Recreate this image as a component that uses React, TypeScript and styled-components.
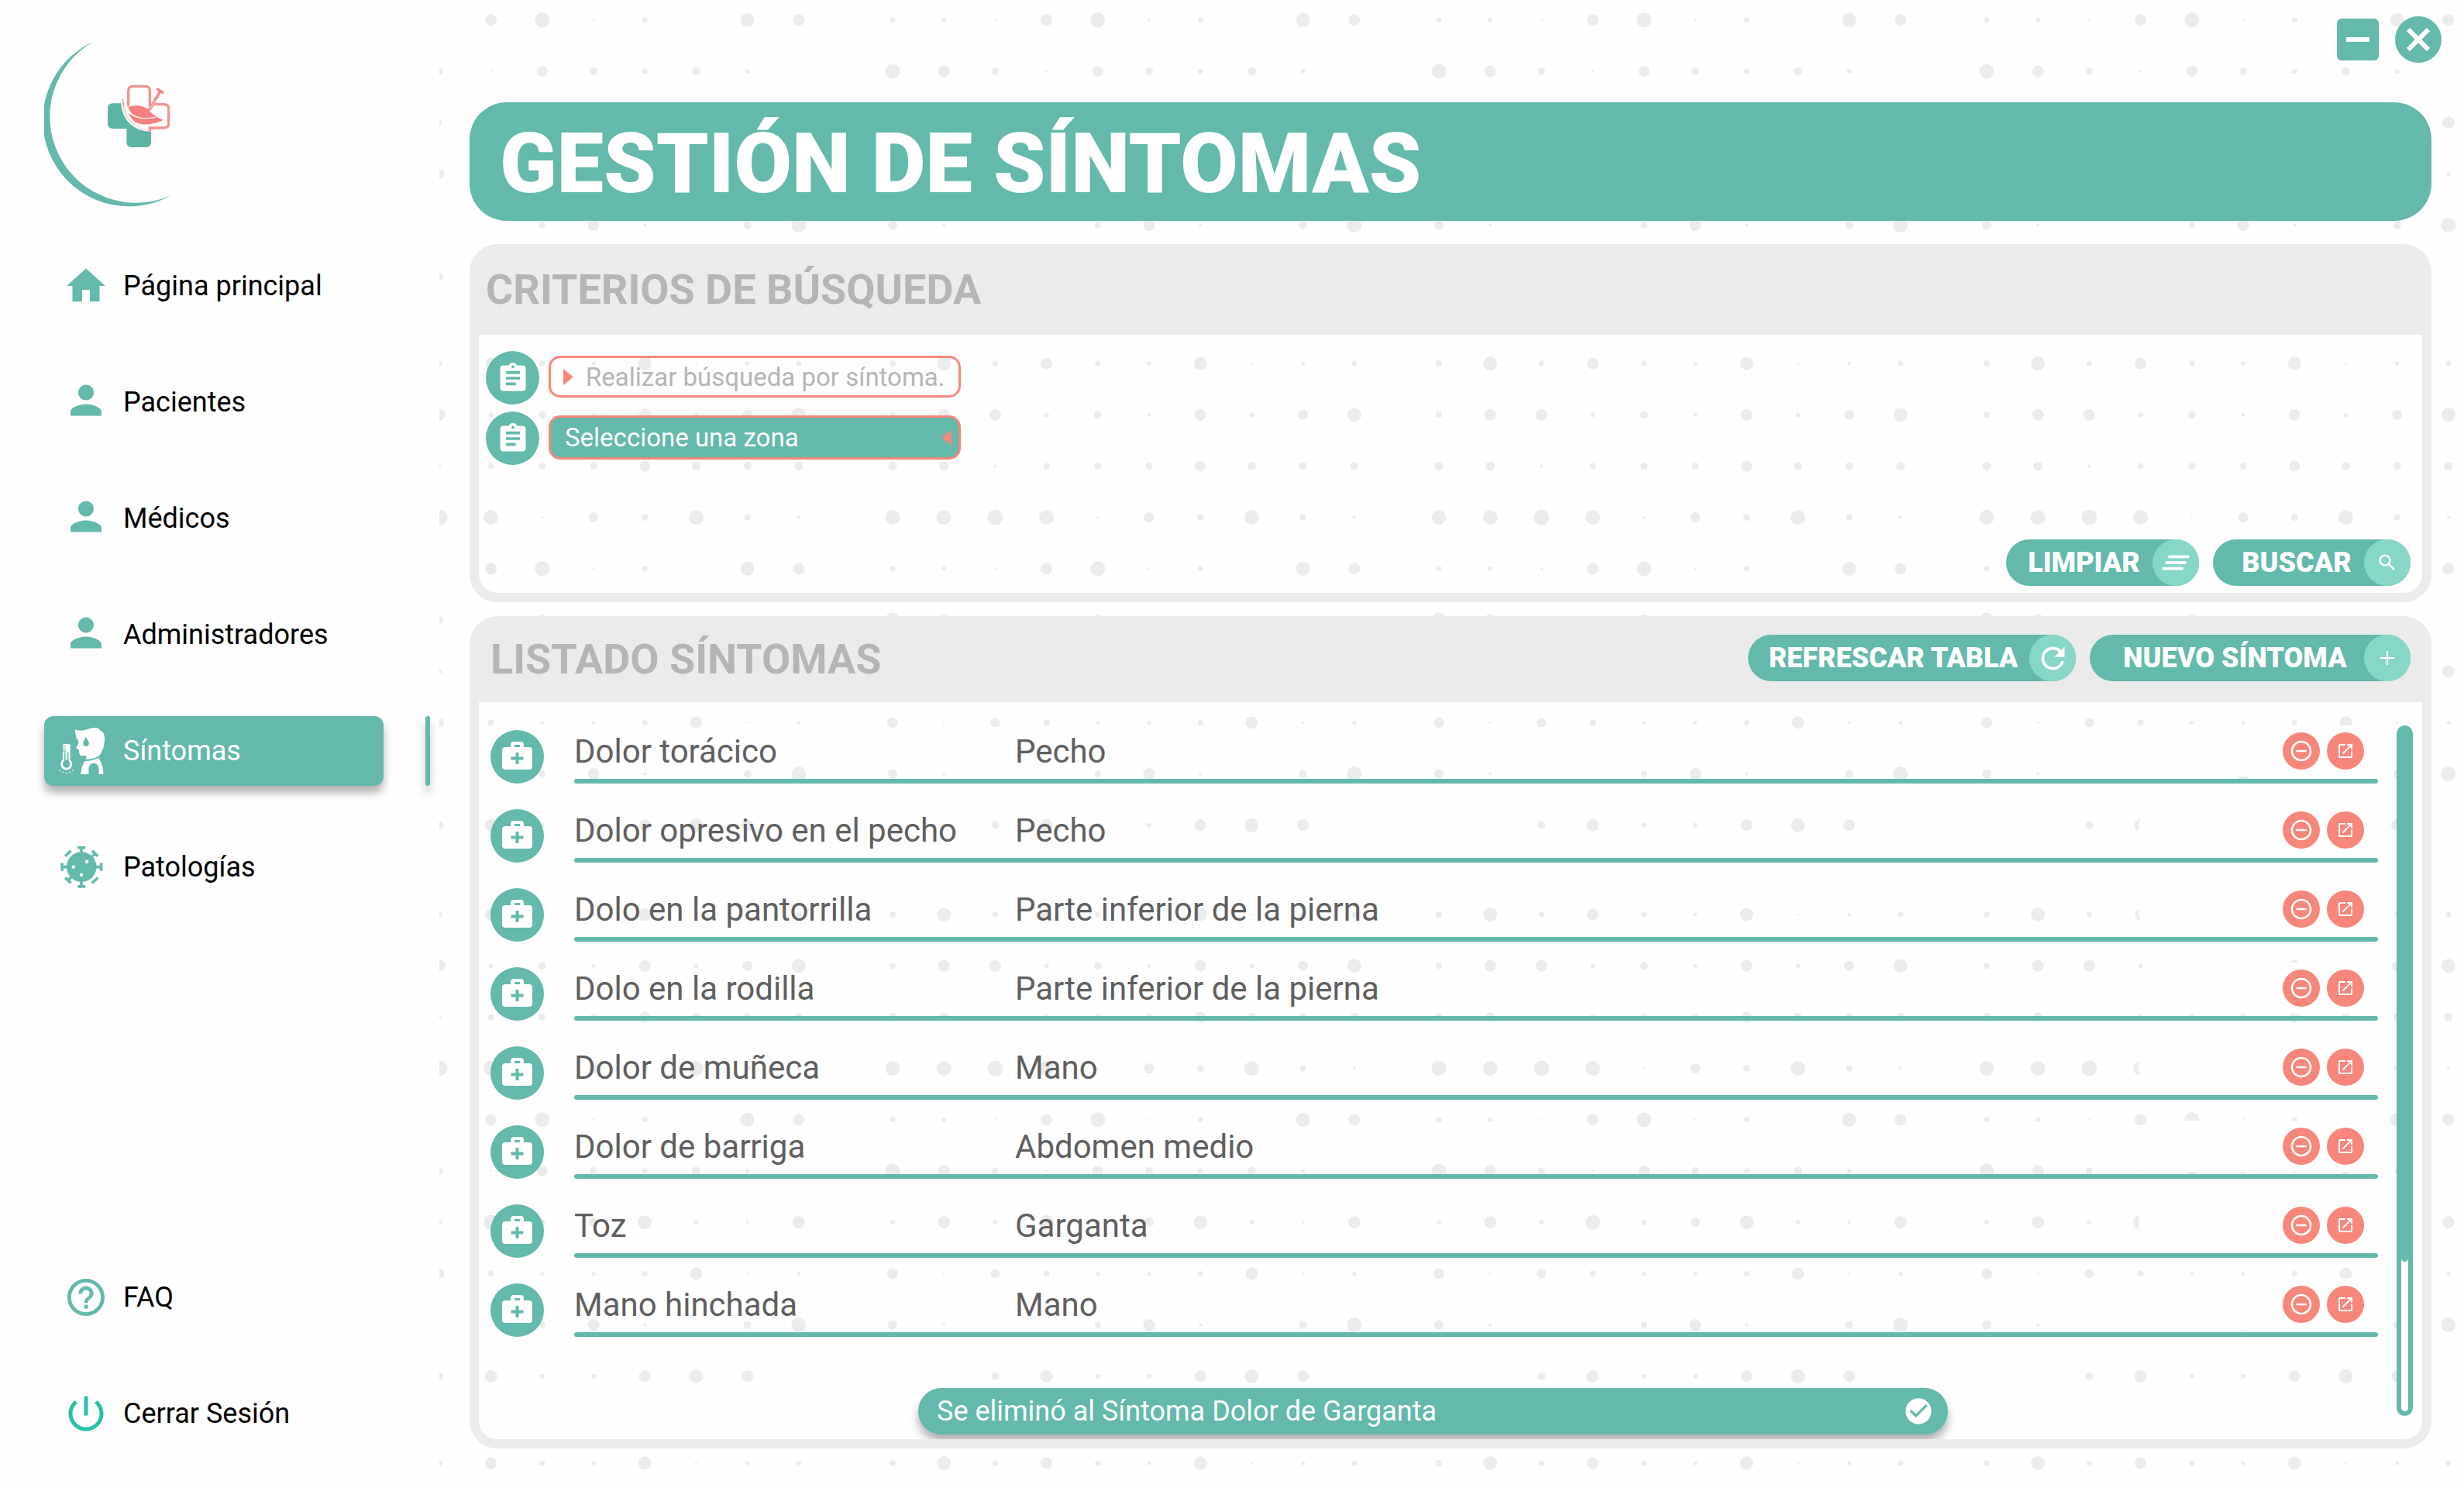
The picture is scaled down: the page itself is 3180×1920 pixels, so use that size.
import React from 'react';
import styled, { createGlobalStyle, css } from 'styled-components';

const teal = '#62b9ac';
const mint = '#87d7c9';
const coral = '#f7867b';
const silver = '#ebebeb';
const muted = '#b5b5b5';
const ink = '#5f5f5f';

const GlobalStyle = createGlobalStyle`
  *, *::before, *::after { box-sizing: border-box; }
  body {
    margin: 0;
    background: #fefefe;
    font-family: Roboto, "Liberation Sans", sans-serif;
  }
  button, input, select { font-family: inherit; }
  ul { list-style: none; margin: 0; padding: 0; }
`;

/* ---------- dotted backdrop ---------- */

const dotSizes = [
  [8, 18, 7, 15, 7, 5, 17, 3, 5, 7],
  [8, 15, 15, 6, 10, 5, 15, 6, 13, 18],
  [11, 12, 4, 8, 9, 9, 14, 11, 10, 11],
  [19, 19, 20, 19, 3, 13, 9, 19, 8, 4],
  [7, 6, 3, 15, 19, 3, 7, 2, 18, 15],
  [19, 15, 9, 3, 14, 10, 7, 11, 6, 0],
  [6, 16, 6, 19, 7, 12, 18, 6, 4, 16],
  [14, 3, 12, 8, 5, 5, 7, 16, 3, 5],
  [12, 4, 2, 2, 8, 15, 4, 2, 10, 19],
  [0, 2, 10, 16, 6, 6, 15, 18, 15, 2],
];
const tileColumns = [-132, 585, 1290, 1997];
const tileRows = [-239, 469, 1180, 1888];
const dotStep = 66.2;

const Backdrop = styled.svg`
  position: absolute;
  inset: 0;
  width: 100%;
  height: 100%;
  fill: ${silver};
`;

function Dots() {
  return (
    <Backdrop aria-hidden="true">
      {tileRows.map((ty) =>
        tileColumns.map((tx) =>
          dotSizes.map((line, r) =>
            line.map((size, c) => (
              <circle key={`${tx}-${ty}-${r}-${c}`} cx={tx + c * dotStep} cy={ty + r * dotStep} r={size / 2} />
            ))
          )
        )
      )}
    </Backdrop>
  );
}

/* ---------- icons ---------- */

type IconProps = { size: number; d: string; color?: string; box?: string };

const Icon = ({ size, d, color = 'currentColor', box = '0 0 24 24' }: IconProps) => (
  <svg width={size} height={size} viewBox={box} fill={color} aria-hidden="true">
    <path d={d} />
  </svg>
);

const paths = {
  home: 'M10 20v-6h4v6h5v-8h3L12 3 2 12h3v8z',
  person: 'M12 12c2.21 0 4-1.79 4-4s-1.79-4-4-4-4 1.79-4 4 1.79 4 4 4zm0 2c-2.67 0-8 1.34-8 4v2h16v-2c0-2.66-5.33-4-8-4z',
  help: 'M11 18h2v-2h-2v2zm1-16C6.48 2 2 6.48 2 12s4.48 10 10 10 10-4.48 10-10S17.52 2 12 2zm0 18c-4.41 0-8-3.59-8-8s3.59-8 8-8 8 3.59 8 8-3.59 8-8 8zm0-14c-2.21 0-4 1.79-4 4h2c0-1.1.9-2 2-2s2 .9 2 2c0 2-3 1.75-3 5h2c0-2.25 3-2.5 3-5 0-2.21-1.79-4-4-4z',
  power: 'M13 3h-2v10h2V3zm4.83 2.17l-1.42 1.42C17.99 7.86 19 9.81 19 12c0 3.87-3.13 7-7 7s-7-3.13-7-7c0-2.19 1.01-4.14 2.58-5.42L6.17 5.17C4.23 6.82 3 9.26 3 12c0 4.97 4.03 9 9 9s9-4.03 9-9c0-2.74-1.23-5.18-3.17-6.83z',
  assignment: 'M19 3h-4.18C14.4 1.84 13.3 1 12 1c-1.3 0-2.4.84-2.82 2H5c-1.1 0-2 .9-2 2v14c0 1.1.9 2 2 2h14c1.1 0 2-.9 2-2V5c0-1.1-.9-2-2-2zm-7 0c.55 0 1 .45 1 1s-.45 1-1 1-1-.45-1-1 .45-1 1-1zm2 14H7v-2h7v2zm3-4H7v-2h10v2zm0-4H7V7h10v2z',
  clear: 'M5 13h14v-2H5v2zm-2 4h14v-2H3v2zM7 7v2h14V7H7z',
  search: 'M15.5 14h-.79l-.28-.27C15.41 12.59 16 11.11 16 9.5 16 5.91 13.09 3 9.5 3S3 5.91 3 9.5 5.91 16 9.5 16c1.61 0 3.09-.59 4.23-1.57l.27.28v.79l5 4.99L20.49 19l-4.99-5zm-6 0C7.01 14 5 11.99 5 9.5S7.01 5 9.5 5 14 7.01 14 9.5 11.99 14 9.5 14z',
  refresh: 'M17.65 6.35C16.2 4.9 14.21 4 12 4c-4.42 0-7.99 3.58-7.99 8s3.57 8 7.99 8c3.73 0 6.84-2.55 7.73-6h-2.08c-.82 2.33-3.04 4-5.65 4-3.31 0-6-2.69-6-6s2.69-6 6-6c1.66 0 3.14.69 4.22 1.78L13 11h7V4l-2.35 2.35z',
  remove: 'M7 11v2h10v-2H7zm5-9C6.48 2 2 6.48 2 12s4.48 10 10 10 10-4.48 10-10S17.52 2 12 2zm0 18c-4.41 0-8-3.59-8-8s3.59-8 8-8 8 3.59 8 8-3.59 8-8 8z',
  open: 'M19 19H5V5h7V3H5c-1.11 0-2 .9-2 2v14c0 1.1.89 2 2 2h14c1.1 0 2-.9 2-2v-7h-2v7zM14 3v2h3.59l-9.83 9.83 1.41 1.41L19 6.41V10h2V3h-7z',
  check: 'M12 2C6.48 2 2 6.48 2 12s4.48 10 10 10 10-4.48 10-10S17.52 2 12 2zm-2 15l-5-5 1.41-1.41L10 14.17l7.59-7.59L19 8l-9 9z',
};

const PlusIcon = () => (
  <svg width="18" height="18" viewBox="0 0 18 18" stroke="#fff" strokeWidth="2" aria-hidden="true">
    <path d="M9 0v18M0 9h18" />
  </svg>
);

const MedkitIcon = () => (
  <svg width="69" height="69" viewBox="0 0 69 69" aria-hidden="true">
    <rect x="26" y="15" width="17" height="12" rx="4" fill="#fff" />
    <rect x="15" y="22" width="39" height="29" rx="4" fill="#fff" />
    <rect x="31" y="19" width="7" height="3" fill={teal} />
    <path d="M34.5 29v15M26.5 36.5h16" stroke={teal} strokeWidth="4" />
  </svg>
);

const SymptomsIcon = () => (
  <svg width="72" height="60" viewBox="174 857 182 152" fill="#fff" aria-hidden="true">
    <path d="M244 863Q262 870 285 862Q305 855 318 858Q324 861 327 866Q343 872 341 898Q339 932 321 951Q305 959 281 961V949L262 948Q257 944 257 928L247 924L256 908L255 899Q246 892 244 863Z" />
    <path fill={teal} d="M280 887Q271 902 271 908a9 9 0 0 0 19 0Q289 902 280 887Z" />
    <path d="M263 1009Q265 984 275 967Q305 965 321 956Q336 975 337 1009H322V990Q321 974 306 973Q290 974 289 990V1009Z" />
    <path d="M204 916q0-6 6-6h13q6 0 6 6v44h-25z" />
    <circle cx="216" cy="976" r="19" />
    <circle cx="216" cy="976" r="12" fill={teal} />
    <path fill={teal} d="M209 937h4v31h-4zM219 937h4v31h-4zM204 917h11v3h-11zM204 925h11v3h-11zM204 932h11v3h-11zM211 962h10v8h-10z" />
    <path d="M192 995h4v4h-4zM202 1000h4v4h-4zM214 1003h4v4h-4zM226 1000h4v4h-4zM235 995h4v4h-4z" />
  </svg>
);

const VirusIcon = () => (
  <svg width="72" height="60" viewBox="174 1237 182 152" aria-hidden="true">
    <circle cx="265.500" cy="1312" r="49" fill={teal} />
    <path
      stroke={teal}
      strokeWidth="9"
      fill="none"
      d="M253 1249h25M265 1249v20M253 1376h25M265 1376v-20M202 1299v26M202 1312h20M330 1299v26M330 1312h-20M212 1277l19-18M300 1259l19 18M300 1278l9-9M212 1347l19 18M221 1356l10-10M300 1365l19-18"
    />
    <path fill="#fff" d="M234 1307h10v10h-10zM278 1290h10v10h-10zM260 1333h10v10h-10z" />
  </svg>
);

const Logo = styled.svg`
  display: block;
  width: 170px;
  height: 220px;
  margin: 50px 0 54px;
`;

const BrandMark = () => (
  <Logo viewBox="57 50 170 220" role="img" aria-label="Logo">
    <path fill={teal} d="M121 53.500A111.250 111.250 0 1 0 221 252A111.250 111.250 0 0 1 121 53.500Z" />
    <g transform="translate(130 100) scale(.3333)">
      <path fill="#5cb3a6" d="M47 100H120V180H195V250q0 20-20 20H120q-20 0-20-20V198H47q-20 0-20-20V120q0-20 20-20Z" />
      <path fill="#fefefe" d="M78 70C74 150 110 206 195 210L272 208V20H78Z" />
      <path fill="none" stroke="#f29494" strokeWidth="10" d="M107 112V52q0-18 18-18h47q18 0 18 18V112M205 104h41q17 0 17 17v57q0 17-17 17H190v14" />
      <path fill="#f29494" d="M84 74C80 150 122 206 214 208C150 203 108 172 97 128Q90 104 84 74Z" />
      <path fill="none" stroke="#fefefe" strokeWidth="4" d="M89 110C98 160 130 190 180 202" />
      <path fill="#fa7f7f" d="M106 116C130 104 162 108 184 122C196 140 214 152 242 164C205 178 160 160 130 146Q114 136 106 116Z" />
      <path fill="#fa7f7f" d="M107 138C140 158 180 160 240 165C205 184 150 190 124 164Q113 152 107 138Z" />
      <path fill="none" stroke="#fefefe" strokeWidth="4" d="M108 136C140 162 175 160 212 154" />
      <path fill="none" stroke="#f58a8a" strokeWidth="11" d="M188 126L231 52" />
      <path fill="none" stroke="#f58a8a" strokeWidth="10" strokeLinecap="round" d="M220 45L240 58" />
      <path fill="none" stroke="#fefefe" strokeWidth="2" d="M192 120L212 86" />
    </g>
  </Logo>
);

/* ---------- sidebar ---------- */

const Shell = styled.div`
  display: grid;
  grid-template-columns: 567px 1fr;
  min-height: 100vh;
`;

const Sidebar = styled.aside`
  display: flex;
  flex-direction: column;
  padding: 0 0 51px 57px;
`;

const Menu = styled.nav`
  flex: 1;
  display: flex;
  flex-direction: column;
  justify-content: space-between;
`;

const MenuGroup = styled.ul`
  display: flex;
  flex-direction: column;
  gap: 60px;
`;

const MenuRow = styled.li`
  display: flex;
  gap: 54px;
`;

const raised = css`
  box-shadow: 0 9px 12px rgba(0, 0, 0, 0.3);
`;

const MenuLink = styled.a<{ $active?: boolean }>`
  display: flex;
  align-items: center;
  gap: 18px;
  width: 438px;
  height: 90px;
  padding-left: 12px;
  border-radius: 12px;
  font-size: 36px;
  text-decoration: none;
  color: ${(p) => (p.$active ? '#fff' : '#000')};
  background: ${(p) => (p.$active ? teal : 'transparent')};
  ${(p) => p.$active && raised}
`;

const IconSlot = styled.span<{ $tint?: string }>`
  display: flex;
  justify-content: flex-end;
  align-items: center;
  width: 72px;
  height: 60px;
  color: ${(p) => p.$tint ?? teal};
`;

const Marker = styled.span`
  width: 6px;
  border-radius: 3px;
  background: ${teal};
  box-shadow: 0 9px 12px rgba(0, 0, 0, 0.25);
`;

type MenuEntry = { label: string; icon: React.ReactNode; tint?: string; active?: boolean };

const person = <Icon size={60} d={paths.person} box="0 1 24 24" />;

const mainMenu: MenuEntry[] = [
  { label: 'Página principal', icon: <Icon size={60} d={paths.home} /> },
  { label: 'Pacientes', icon: person },
  { label: 'Médicos', icon: person },
  { label: 'Administradores', icon: person },
  { label: 'Síntomas', icon: <SymptomsIcon />, active: true },
  { label: 'Patologías', icon: <VirusIcon /> },
];

const footMenu: MenuEntry[] = [
  { label: 'FAQ', icon: <Icon size={60} d={paths.help} box="-0.500 -0.500 25 25" /> },
  { label: 'Cerrar Sesión', icon: <Icon size={60} d={paths.power} />, tint: '#27c1a9' },
];

const MenuList = ({ entries }: { entries: MenuEntry[] }) => (
  <MenuGroup>
    {entries.map((e) => (
      <MenuRow key={e.label}>
        <MenuLink href="#" $active={e.active} aria-current={e.active ? 'page' : undefined}>
          <IconSlot $tint={e.tint}>{e.icon}</IconSlot>
          {e.label}
        </MenuLink>
        {e.active && <Marker />}
      </MenuRow>
    ))}
  </MenuGroup>
);

/* ---------- main area ---------- */

const Main = styled.main`
  position: relative;
  overflow: hidden;
`;

const Content = styled.div`
  position: relative;
  display: flex;
  flex-direction: column;
  min-height: 100%;
  padding: 0 42px 51px 39px;
`;

const WindowBar = styled.div`
  display: flex;
  justify-content: flex-end;
  align-items: center;
  gap: 21px;
  height: 132px;
  padding: 0 0 30px;
  margin-right: -13px;
`;

const WindowButton = styled.button<{ $round?: boolean }>`
  display: grid;
  place-items: center;
  width: ${(p) => (p.$round ? 60 : 54)}px;
  height: ${(p) => (p.$round ? 60 : 54)}px;
  padding: 0;
  border: 0;
  border-radius: ${(p) => (p.$round ? '50%' : '6px')};
  background: ${teal};
`;

const Banner = styled.header`
  display: flex;
  align-items: center;
  height: 153px;
  margin-bottom: 30px;
  padding: 4px 39px 0;
  border-radius: 48px;
  background: ${teal};
`;

const Title = styled.h1`
  margin: 0;
  color: #fff;
  font-size: 108px;
  line-height: 126px;
  font-weight: 900;
`;

const Panel = styled.section<{ $grow?: boolean }>`
  display: flex;
  flex-direction: column;
  flex: ${(p) => (p.$grow ? 1 : 'none')};
  border: 12px solid ${silver};
  border-radius: 36px;
  & + & { margin-top: 18px; }
`;

const Actions = styled.div`
  display: flex;
  justify-content: flex-end;
  gap: 18px;
`;

const PanelHead = styled.div<{ $inset: number }>`
  display: flex;
  align-items: center;
  justify-content: space-between;
  padding: 0 15px 12px ${(p) => p.$inset}px;
  background: ${silver};
  ${Actions} { margin-bottom: 3px; }
`;

const PanelTitle = styled.h2<{ $height: number }>`
  margin: 0;
  color: ${muted};
  font-size: 54px;
  line-height: ${(p) => p.$height}px;
  font-weight: 700;
`;

const Pill = styled.button<{ $width: number; $inset: number }>`
  display: flex;
  align-items: center;
  width: ${(p) => p.$width}px;
  height: 60px;
  padding: 0 0 0 ${(p) => p.$inset}px;
  border: 0;
  border-radius: 30px;
  background: ${teal};
  color: #fff;
  font-size: 36px;
  font-weight: 900;
`;

const PillLabel = styled.span`
  flex: 1;
  text-align: center;
  white-space: nowrap;
`;

const PillCap = styled.span`
  display: grid;
  place-items: center;
  width: 60px;
  height: 60px;
  border-radius: 50%;
  background: ${mint};
`;

type PillProps = { label: string; icon: React.ReactNode; width: number; inset: number };

const PillButton = ({ label, icon, width, inset }: PillProps) => (
  <Pill type="button" $width={width} $inset={inset}>
    <PillLabel>{label}</PillLabel>
    <PillCap>{icon}</PillCap>
  </Pill>
);

/* ---------- search ---------- */

const SearchBody = styled.form`
  display: flex;
  flex-direction: column;
  gap: 9px;
  padding: 21px 15px 9px 9px;
`;

const Field = styled.div`
  display: flex;
  align-items: center;
  gap: 12px;
  & + ${Actions} { margin-top: 87px; }
`;

const Badge = styled.label`
  display: grid;
  place-items: center;
  width: 69px;
  height: 69px;
  border-radius: 50%;
  background: ${teal};
`;

const TextBox = styled.div`
  display: flex;
  align-items: center;
  gap: 16px;
  width: 532px;
  height: 54px;
  margin-bottom: 3px;
  padding: 0 16px;
  border: 3px solid ${coral};
  border-radius: 15px;
`;

const TextInput = styled.input`
  flex: 1;
  min-width: 0;
  padding: 0;
  border: 0;
  outline: 0;
  background: transparent;
  color: ${ink};
  font-size: 33px;
  &::placeholder { color: ${muted}; opacity: 1; }
`;

const SelectBox = styled.div`
  display: grid;
  align-items: center;
  width: 532px;
  margin-bottom: 3px;
  & > * { grid-area: 1 / 1; }
  & > svg { justify-self: end; margin-right: 12px; pointer-events: none; }
`;

const Select = styled.select`
  appearance: none;
  height: 57px;
  padding: 0 18px;
  border: 3px solid ${coral};
  border-radius: 15px;
  background: ${teal};
  color: #fff;
  font-size: 33px;
`;

const Triangle = ({ d }: { d: string }) => (
  <svg width="13" height="21" viewBox="0 0 13 21" fill={coral} aria-hidden="true">
    <path d={d} />
  </svg>
);

/* ---------- list ---------- */

const ListBody = styled.div`
  position: relative;
  flex: 1;
  display: grid;
  grid-template-columns: 1fr 21px;
  gap: 24px;
  padding: 30px 12px 30px 15px;
  overflow: hidden;
  border-radius: 0 0 24px 24px;
`;

const Table = styled.table`
  display: block;
  color: ${ink};
  font-size: 42px;
`;

const Rows = styled.tbody`
  display: flex;
  flex-direction: column;
  gap: 27px;
`;

const Row = styled.tr`
  display: grid;
  grid-template-columns: 108px 569px 1fr 309px;
  grid-template-rows: 66px 6px;
  row-gap: 3px;
  align-items: center;
  &::after {
    content: '';
    grid-area: 2 / 2 / 3 / -1;
    height: 6px;
    border-radius: 3px;
    background: ${teal};
  }
`;

const Cell = styled.td`
  padding: 0;
  white-space: nowrap;
`;

const KitCell = styled(Cell)`
  grid-row: 1 / 3;
  align-self: end;
`;

const KitBadge = styled.span`
  display: block;
  width: 69px;
  height: 69px;
  border-radius: 50%;
  background: ${teal};
`;

const ToolCell = styled(Cell)`
  display: flex;
  justify-content: flex-end;
  gap: 9px;
  padding: 9px 18px 9px 0;
  border-radius: 30px;
  background: #fefefe;
`;

const RoundButton = styled.button`
  display: grid;
  place-items: center;
  width: 48px;
  height: 48px;
  padding: 0;
  border: 0;
  border-radius: 50%;
  background: ${coral};
`;

const Track = styled.div`
  border: 6px solid ${teal};
  border-radius: 11px;
  background: #fff;
`;

const Thumb = styled.div`
  height: 78%;
  border-radius: 0 0 5px 5px;
  background: ${teal};
`;

const Toast = styled.div`
  position: absolute;
  left: 567px;
  bottom: 6px;
  display: flex;
  align-items: center;
  justify-content: space-between;
  width: 53%;
  height: 60px;
  padding: 0 18px 0 24px;
  border-radius: 30px;
  background: ${teal};
  color: #fff;
  font-size: 36px;
  ${raised}
`;

const symptoms = [
  ['Dolor torácico', 'Pecho'],
  ['Dolor opresivo en el pecho', 'Pecho'],
  ['Dolo en la pantorrilla', 'Parte inferior de la pierna'],
  ['Dolo en la rodilla', 'Parte inferior de la pierna'],
  ['Dolor de muñeca', 'Mano'],
  ['Dolor de barriga', 'Abdomen medio'],
  ['Toz', 'Garganta'],
  ['Mano hinchada', 'Mano'],
];

export default function App() {
  return (
    <>
      <GlobalStyle />
      <Shell>
        <Sidebar>
          <BrandMark />
          <Menu>
            <MenuList entries={mainMenu} />
            <MenuList entries={footMenu} />
          </Menu>
        </Sidebar>

        <Main>
          <Dots />
          <Content>
            <WindowBar>
              <WindowButton type="button" aria-label="Minimizar">
                <svg width="30" height="6" aria-hidden="true">
                  <rect width="30" height="6" fill="#fff" />
                </svg>
              </WindowButton>
              <WindowButton type="button" $round aria-label="Cerrar">
                <svg width="30" height="30" viewBox="0 0 30 30" stroke="#fff" strokeWidth="6" aria-hidden="true">
                  <path d="M2 2l26 26M28 2L2 28" />
                </svg>
              </WindowButton>
            </WindowBar>

            <Banner>
              <Title>GESTIÓN DE SÍNTOMAS</Title>
            </Banner>

            <Panel>
              <PanelHead $inset={9}>
                <PanelTitle $height={93}>CRITERIOS DE BÚSQUEDA</PanelTitle>
              </PanelHead>
              <SearchBody>
                <Field>
                  <Badge htmlFor="symptom" aria-label="Síntoma">
                    <Icon size={44} d={paths.assignment} color="#fff" />
                  </Badge>
                  <TextBox>
                    <Triangle d="M0 0L13 10.500L0 21Z" />
                    <TextInput id="symptom" type="text" placeholder="Realizar búsqueda por síntoma." />
                  </TextBox>
                </Field>
                <Field>
                  <Badge htmlFor="zone" aria-label="Zona">
                    <Icon size={44} d={paths.assignment} color="#fff" />
                  </Badge>
                  <SelectBox>
                    <Select id="zone">
                      <option>Seleccione una zona</option>
                    </Select>
                    <Triangle d="M13 0L0 10.500L13 21Z" />
                  </SelectBox>
                </Field>
                <Actions>
                  <PillButton label="LIMPIAR" width={249} inset={12} icon={<Icon size={46} d={paths.clear} color="#fff" />} />
                  <PillButton label="BUSCAR" width={255} inset={21} icon={<Icon size={28} d={paths.search} color="#fff" />} />
                </Actions>
              </SearchBody>
            </Panel>

            <Panel $grow>
              <PanelHead $inset={15}>
                <PanelTitle $height={87}>LISTADO SÍNTOMAS</PanelTitle>
                <Actions>
                  <PillButton label="REFRESCAR TABLA" width={423} inset={12} icon={<Icon size={45} d={paths.refresh} color="#fff" />} />
                  <PillButton label="NUEVO SÍNTOMA" width={414} inset={21} icon={<PlusIcon />} />
                </Actions>
              </PanelHead>
              <ListBody>
                <Table>
                  <Rows>
                    {symptoms.map(([name, zone]) => (
                      <Row key={name}>
                        <KitCell>
                          <KitBadge>
                            <MedkitIcon />
                          </KitBadge>
                        </KitCell>
                        <Cell>{name}</Cell>
                        <Cell>{zone}</Cell>
                        <ToolCell>
                          <RoundButton type="button" aria-label={`Eliminar ${name}`}>
                            <Icon size={32} d={paths.remove} color="#fff" />
                          </RoundButton>
                          <RoundButton type="button" aria-label={`Abrir ${name}`}>
                            <Icon size={24} d={paths.open} color="#fff" />
                          </RoundButton>
                        </ToolCell>
                      </Row>
                    ))}
                  </Rows>
                </Table>
                <Track>
                  <Thumb />
                </Track>
                <Toast role="status">
                  Se eliminó al Síntoma Dolor de Garganta
                  <Icon size={40} d={paths.check} color="#fff" />
                </Toast>
              </ListBody>
            </Panel>
          </Content>
        </Main>
      </Shell>
    </>
  );
}
